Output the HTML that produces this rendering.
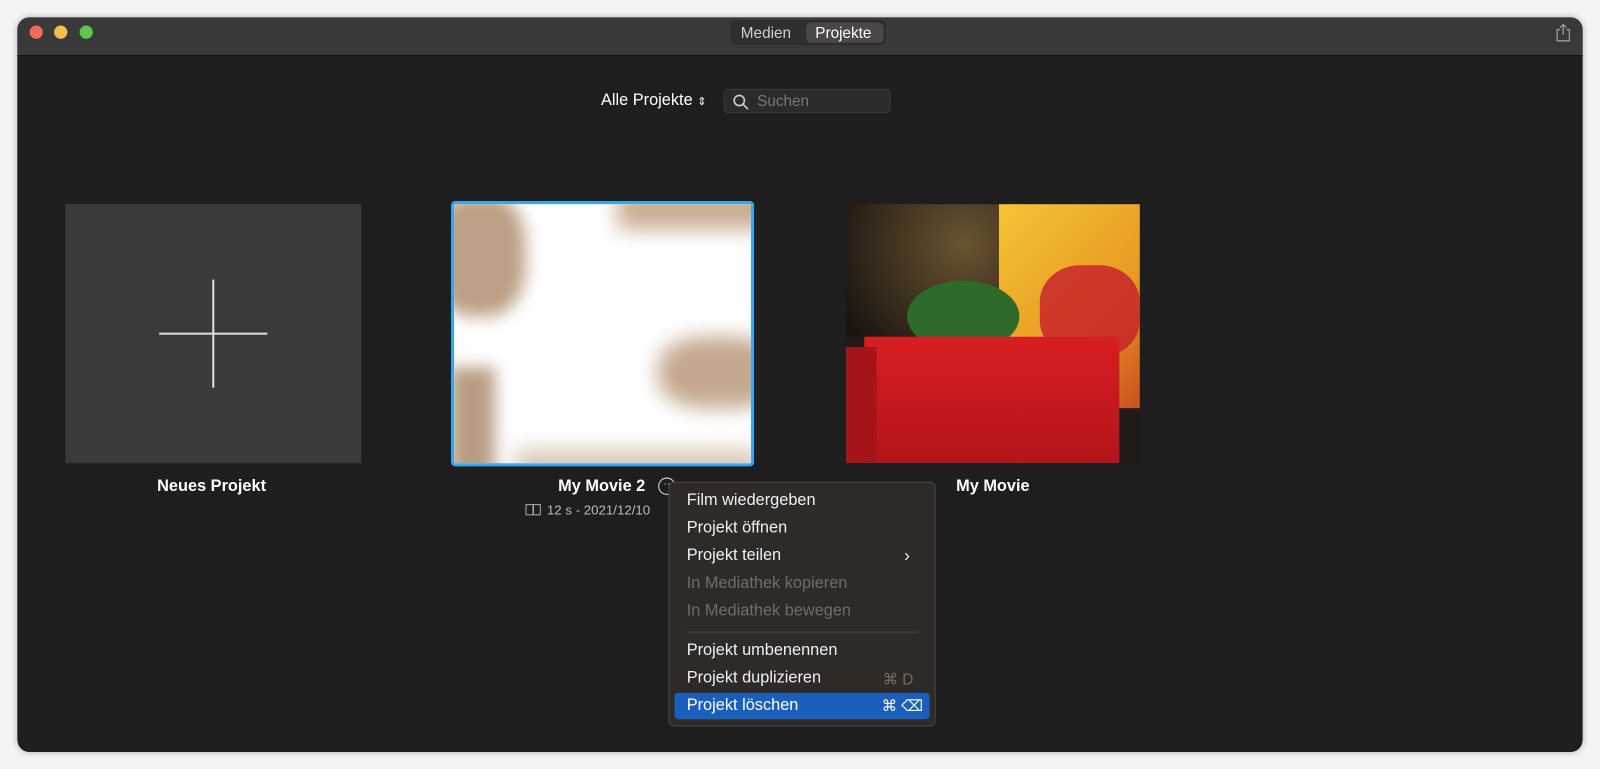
<!DOCTYPE html>
<html><head><meta charset="utf-8"><style>
*{margin:0;padding:0;box-sizing:border-box}
body{width:1600px;height:769px;background:#f4f4f4;font-family:"Liberation Sans",sans-serif;position:relative;overflow:hidden}
.wrap{position:absolute;left:0;top:0;width:1568px;height:754px;transform:scale(1.0204);transform-origin:0 0}
.win{position:absolute;left:17px;top:17px;width:1534px;height:720px;border-radius:12px;background:#1e1e1e;overflow:hidden;box-shadow:0 0 6px rgba(0,0,0,.25)}
.tb{position:absolute;left:0;top:0;width:100%;height:38px;background:#393939;border-bottom:1px solid #111}
.dot{position:absolute;top:8px;width:13px;height:13px;border-radius:50%}
.seg{position:absolute;left:699px;top:3px;width:152px;height:24px;background:#2f2f2f;border-radius:6px;border:1px solid #2a2a2a}
.seg span{position:absolute;top:3px;font-size:15px;color:#cfcfcf}
.t{position:absolute;color:#fff;font-size:16px}
.menu{position:absolute;left:638px;top:455px;width:262px;height:240px;background:#2d2a28;border:1px solid #4a4745;border-radius:6px}
.mi{position:absolute;left:17px;font-size:16px;color:#f0f0f0}
.dis{color:#6f6d6b}
</style></head><body>
<div class="wrap">
<div class="win">
 <div class="tb">
  <div class="dot" style="left:12px;background:#ed6a5e"></div>
  <div class="dot" style="left:36px;background:#f4be4f"></div>
  <div class="dot" style="left:61px;background:#61c554"></div>
  <div class="seg"><span style="left:9px">Medien</span><div style="position:absolute;left:73px;top:1px;width:76px;height:20px;background:#4a4746;border-radius:5px"></div><span style="left:82px;color:#fff">Projekte</span></div>
  <svg style="position:absolute;left:1507px;top:6px" width="16" height="18" viewBox="0 0 16 18" fill="none" stroke="#9a9a9a" stroke-width="1.3"><path d="M5 6H2v11h12V6h-3M8 1v10M5 4l3-3 3 3"/></svg>
 </div>
 <div class="t" style="left:572px;top:73px">Alle Projekte <span style="font-size:11px">⇕</span></div>
 <div style="position:absolute;left:692px;top:70px;width:164px;height:24px;background:#2b2b2b;border:1px solid #3a3a3a;border-radius:5px">
  <svg style="position:absolute;left:8px;top:4px" width="16" height="16" viewBox="0 0 16 16" fill="none" stroke="#ccc" stroke-width="1.6"><circle cx="6.5" cy="6.5" r="5"/><path d="M10 10l5 5"/></svg>
  <span style="position:absolute;left:32px;top:3px;font-size:15px;color:#777">Suchen</span></div>
 <div style="position:absolute;left:47px;top:183px;width:290px;height:254px;background:#3a3a3a"></div>
 <div style="position:absolute;left:191px;top:257px;width:1.5px;height:106px;background:#ddd"></div>
 <div style="position:absolute;left:139px;top:309px;width:106px;height:1.5px;background:#ddd"></div>
 <div class="t" style="left:137px;top:451px;font-weight:bold">Neues Projekt</div>
 <div style="position:absolute;left:425px;top:180px;width:297px;height:260px;border:3px solid #3aa6e8;border-radius:4px;overflow:hidden;background:#fff">
  <div style="position:absolute;left:-20px;top:-10px;width:90px;height:120px;background:#bca085;border-radius:40%;filter:blur(8px)"></div>
  <div style="position:absolute;left:200px;top:130px;width:120px;height:70px;background:#c4a88e;border-radius:40%;filter:blur(10px)"></div>
  <div style="position:absolute;left:-5px;top:160px;width:45px;height:110px;background:#b89c82;filter:blur(8px)"></div>
  <div style="position:absolute;left:160px;top:-15px;width:160px;height:40px;background:#c8ae94;filter:blur(10px)"></div>
  <div style="position:absolute;left:60px;top:240px;width:240px;height:30px;background:#d8c8b8;filter:blur(10px)"></div>
 </div>
 <div class="t" style="left:530px;top:451px;font-weight:bold">My Movie 2</div>
 <div style="position:absolute;left:628px;top:451px;width:17px;height:17px;border:1.5px solid #ddd;border-radius:50%;color:#ddd;font-size:10px;text-align:center;line-height:11px">··</div>
 <div style="position:absolute;left:498px;top:475px;font-size:13px;color:#bbb"><span style="display:inline-block;width:15px;height:11px;border:1.5px solid #aaa;margin-right:6px;vertical-align:-1px;background:linear-gradient(90deg,transparent 6px,#aaa 6px,#aaa 7.5px,transparent 7.5px)"></span>12 s - 2021/12/10</div>
 <div style="position:absolute;left:812px;top:183px;width:288px;height:254px;overflow:hidden;background:#201a18">
  <div style="position:absolute;left:0;top:0;width:288px;height:130px;background:radial-gradient(circle at 40% 30%,#6a5430,#1a1410 70%)"></div>
  <div style="position:absolute;left:150px;top:0;width:140px;height:200px;background:linear-gradient(135deg,#f4c436,#e89a22 60%,#c8501f)"></div>
  <div style="position:absolute;left:190px;top:60px;width:98px;height:90px;background:#c8262a;border-radius:40%;opacity:.85"></div>
  <div style="position:absolute;left:60px;top:75px;width:110px;height:70px;background:#2e6a2a;border-radius:50%"></div>
  <div style="position:absolute;left:18px;top:130px;width:250px;height:124px;background:linear-gradient(180deg,#d81e22,#b3141a)"></div>
  <div style="position:absolute;left:0;top:140px;width:30px;height:114px;background:#a51418"></div>
 </div>
 <div class="t" style="left:920px;top:451px;font-weight:bold">My Movie</div>
 <div class="menu">
  <div class="mi" style="top:9px">Film wiedergeben</div>
  <div class="mi" style="top:36px">Projekt öffnen</div>
  <div class="mi" style="top:63px">Projekt teilen</div>
  <div style="position:absolute;left:230px;top:62px;color:#eee;font-size:17px">›</div>
  <div class="mi dis" style="top:90px">In Mediathek kopieren</div>
  <div class="mi dis" style="top:117px">In Mediathek bewegen</div>
  <div style="position:absolute;left:17px;top:146px;width:227px;height:1px;background:#4a4745"></div>
  <div class="mi" style="top:156px">Projekt umbenennen</div>
  <div class="mi" style="top:183px">Projekt duplizieren</div>
  <div style="position:absolute;left:209px;top:184px;font-size:15px;color:#6f6d6b">⌘ D</div>
  <div style="position:absolute;left:5px;top:206px;width:250px;height:26px;background:#1b5fbd;border-radius:4px"></div>
  <div class="mi" style="top:210px;color:#fff">Projekt löschen</div>
  <div style="position:absolute;left:208px;top:210px;font-size:15px;color:#fff">⌘ ⌫</div>
 </div>
</div>
</div>
</body></html>
